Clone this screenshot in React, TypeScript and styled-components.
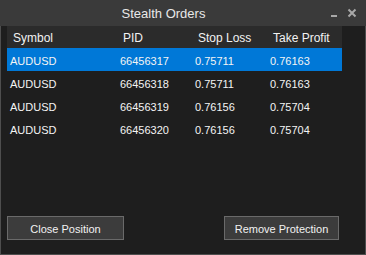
import React from 'react'
import styled, { createGlobalStyle } from 'styled-components'

const GlobalStyle = createGlobalStyle`
  html, body {
    margin: 0;
    padding: 0;
    background: #1e1e1e;
  }
  * {
    box-sizing: border-box;
  }
`

const Window = styled.div`
  width: 366px;
  height: 255px;
  display: flex;
  flex-direction: column;
  background: #1e1e1e;
  border: 1px solid #4e4e4e;
  border-top: none;
  font-family: 'Liberation Sans', Arial, sans-serif;
  color: #f0f0f0;
`

const TitleBar = styled.div`
  height: 26px;
  flex: none;
  display: flex;
  align-items: center;
  margin: 0 -1px;
  padding: 0 1px;
  background: #3a3a3a;
`

const Title = styled.div`
  flex: 1;
  text-align: center;
  font-size: 13px;
  color: #e8e8e8;
  padding-top: 1px;
`

const Controls = styled.div`
  width: 39px;
  display: flex;
  align-items: center;
  gap: 7px;
  padding-left: 4px;
`

const ControlButton = styled.div`
  width: 10px;
  height: 10px;
  display: flex;
  align-items: center;
  justify-content: center;
`

const Body = styled.div`
  flex: 1;
  display: flex;
  flex-direction: column;
`

const List = styled.div`
  width: 335px;
  margin-left: 6px;
`

const HeaderRow = styled.div`
  height: 22px;
  display: grid;
  grid-template-columns: 110px 75px 75px 75px;
  align-items: center;
  padding-top: 2px;
  background: #2b2b2b;
  font-size: 12px;
  color: #f2f2f2;
`

const HeaderCell = styled.div`
  padding-left: 6px;
  white-space: nowrap;
`

const Row = styled.div<{ $selected?: boolean }>`
  height: 23px;
  display: grid;
  grid-template-columns: 110px 75px 75px 75px;
  align-items: center;
  padding-top: 2px;
  font-size: 11px;
  background: ${({ $selected }) => ($selected ? '#0078d7' : 'transparent')};
  color: #f4f4f4;
`

const Cell = styled.div`
  padding-left: 3px;
  white-space: nowrap;
`

const Spacer = styled.div`
  flex: 1;
`

const ButtonBar = styled.div`
  display: flex;
  justify-content: space-between;
  padding: 0 26px 14px 6px;
`

const Button = styled.button<{ $width: number }>`
  width: ${({ $width }) => $width}px;
  height: 24px;
  background: #3c3c3c;
  border: 1px solid #6a6a6a;
  color: #f2f2f2;
  font-family: 'Liberation Sans', Arial, sans-serif;
  font-size: 11px;
  padding: 0;
  padding-top: 1px;
`

const orders = [
  { symbol: 'AUDUSD', pid: '66456317', sl: '0.75711', tp: '0.76163' },
  { symbol: 'AUDUSD', pid: '66456318', sl: '0.75711', tp: '0.76163' },
  { symbol: 'AUDUSD', pid: '66456319', sl: '0.76156', tp: '0.75704' },
  { symbol: 'AUDUSD', pid: '66456320', sl: '0.76156', tp: '0.75704' },
]

export default function App() {
  return (
    <>
      <GlobalStyle />
      <Window>
        <TitleBar>
          <Title>Stealth Orders</Title>
          <Controls>
            <ControlButton>
              <svg width="10" height="10" viewBox="0 0 10 10">
                <rect x="1" y="7" width="6" height="2" fill="#a8a8a8" />
              </svg>
            </ControlButton>
            <ControlButton>
              <svg width="10" height="10" viewBox="0 0 10 10">
                <path d="M1.5 1.5 L8.5 8.5 M8.5 1.5 L1.5 8.5" stroke="#a8a8a8" strokeWidth="2" />
              </svg>
            </ControlButton>
          </Controls>
        </TitleBar>
        <Body>
          <List>
            <HeaderRow>
              <HeaderCell>Symbol</HeaderCell>
              <HeaderCell>PID</HeaderCell>
              <HeaderCell>Stop Loss</HeaderCell>
              <HeaderCell>Take Profit</HeaderCell>
            </HeaderRow>
            {orders.map((o, i) => (
              <Row key={o.pid} $selected={i === 0}>
                <Cell>{o.symbol}</Cell>
                <Cell>{o.pid}</Cell>
                <Cell>{o.sl}</Cell>
                <Cell>{o.tp}</Cell>
              </Row>
            ))}
          </List>
          <Spacer />
          <ButtonBar>
            <Button $width={117}>Close Position</Button>
            <Button $width={115}>Remove Protection</Button>
          </ButtonBar>
        </Body>
      </Window>
    </>
  )
}
